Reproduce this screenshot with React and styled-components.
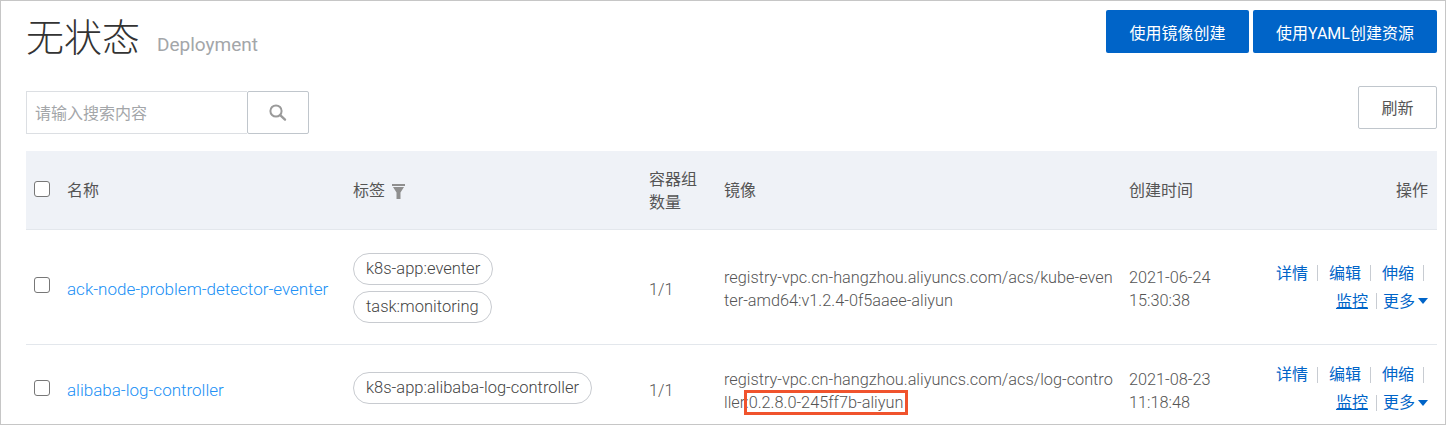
import React from "react"
import styled, { createGlobalStyle } from "styled-components"

const Global = createGlobalStyle`
  html, body {
    margin: 0;
    padding: 0;
    background: #fff;
  }
  body {
    font-family: Roboto, "Noto Sans CJK SC", sans-serif;
    font-size: 16px;
    color: #333;
  }
`

const Page = styled.div`
  box-sizing: border-box;
  width: 1446px;
  height: 425px;
  border: 1px solid #c6c6c6;
  padding: 0 8px 0 25px;
  overflow: hidden;
`

const Header = styled.header`
  display: flex;
  justify-content: space-between;
  height: 85px;
`

const TitleBox = styled.div`
  display: flex;
  align-items: baseline;
  padding-top: 11px;
`

const Title = styled.h1`
  margin: 0;
  font-size: 38px;
  line-height: 52px;
  font-weight: 300;
  color: #333;
`

const SubTitle = styled.span`
  margin-left: 17px;
  font-size: 19px;
  color: #a3a6a9;
`

const Actions = styled.div`
  display: flex;
  gap: 4px;
  padding-top: 9px;
`

const PrimaryButton = styled.button`
  height: 43px;
  width: ${(p) => p.$w}px;
  padding: 0;
  border: none;
  border-radius: 2px;
  background: #0064c8;
  color: #fff;
  font: inherit;
`

const Toolbar = styled.div`
  display: flex;
  justify-content: space-between;
  align-items: flex-start;
  height: 65px;
`

const Search = styled.div`
  display: flex;
  margin-top: 5px;
`

const SearchInput = styled.div`
  box-sizing: border-box;
  width: 221px;
  height: 43px;
  padding-left: 8px;
  border: 1px solid #dcdfe3;
  border-right: none;
  line-height: 43px;
  color: #a3a6a9;
`

const SearchButton = styled.div`
  box-sizing: border-box;
  display: flex;
  align-items: center;
  justify-content: center;
  width: 62px;
  height: 43px;
  padding-top: 1px;
  border: 1px solid #c0c6cc;
  border-radius: 2px;
`

const RefreshButton = styled.button`
  box-sizing: border-box;
  width: 79px;
  height: 43px;
  padding: 0 0 2px;
  border: 1px solid #c0c6cc;
  border-radius: 2px;
  background: #fff;
  color: #555;
  font: inherit;
`

const Table = styled.table`
  width: 1411px;
  table-layout: fixed;
  border-collapse: collapse;
`

const Th = styled.th`
  box-sizing: border-box;
  height: 78px;
  padding: 2px ${(p) => p.$pr || 0}px 0 0;
  background: #eff2f7;
  border-bottom: 1px solid #e3e7ec;
  font-weight: 400;
  line-height: 23px;
  text-align: ${(p) => p.$align || "left"};
  color: #555;
`

const Td = styled.td`
  box-sizing: border-box;
  height: ${(p) => p.$h}px;
  padding: 0;
  border-bottom: ${(p) => (p.$last ? "none" : "1px solid #e3e7ec")};
  color: #555;
  vertical-align: middle;
`

const Check = styled.span`
  display: block;
  box-sizing: border-box;
  width: 16px;
  height: 16px;
  margin: ${(p) => p.$mt ?? -3}px 0 0 8px;
  border: 1px solid #777;
  border-radius: 3px;
  background: #fff;
`

const NameLink = styled.a`
  display: block;
  margin-top: 4px;
  color: #2090f5;
  font-size: 17px;
  font-weight: 300;
`

const FilterIcon = styled.svg`
  width: 13px;
  height: 15px;
  margin-left: 7px;
  vertical-align: -3px;
  fill: #8f8f8f;
`

const TagList = styled.div`
  display: flex;
  flex-direction: column;
  align-items: flex-start;
  gap: 6px;
  margin-top: ${(p) => p.$mt || 0}px;
`

const Tag = styled.span`
  box-sizing: border-box;
  height: 32px;
  padding: 0 12px;
  border: 1px solid #c8cbd0;
  border-radius: 16px;
  line-height: 30px;
  color: #444;
  font-size: 16.5px;
  font-weight: 300;
  white-space: nowrap;
`

const Cell = styled.div`
  padding-right: ${(p) => p.$pr || 0}px;
  margin-top: ${(p) => p.$mt || 0}px;
  font-size: 16.3px;
  font-weight: 300;
  line-height: 23px;
  word-break: break-all;
`

const Marked = styled.span`
  display: inline-block;
  margin: -3px 0 -3px -5px;
  padding: 0 2px;
  border: 3px solid #f0532d;
  line-height: 19px;
`

const OpRows = styled.div`
  display: flex;
  flex-direction: column;
  align-items: flex-end;
  gap: 5px;
  margin-top: ${(p) => p.$mt || 0}px;
`

const OpRow = styled.div`
  display: flex;
  align-items: center;
  line-height: 23px;
  margin-right: ${(p) => p.$mr}px;
`

const OpLink = styled.a`
  color: #0064c8;
`

const OpMain = styled(OpLink)`
  text-decoration: underline;
`

const Sep = styled.span`
  width: 1px;
  height: 16px;
  margin: 0 ${(p) => p.$r ?? 11}px 0 ${(p) => p.$l ?? 9}px;
  background: #c8ccd2;
`

const Caret = styled.span`
  width: 0;
  height: 0;
  margin-left: 3px;
  border-left: 5.5px solid transparent;
  border-right: 5.5px solid transparent;
  border-top: 6px solid #0064c8;
`

const rows = [
  {
    name: "ack-node-problem-detector-eventer",
    tags: ["k8s-app:eventer", "task:monitoring"],
    image: "registry-vpc.cn-hangzhou.aliyuncs.com/acs/kube-eventer-amd64:v1.2.4-0f5aaee-aliyun",
    date: "2021-06-24",
    time: "15:30:38",
    h: 115,
    opMt: 1,
    textMt: 4,
    checkMt: -4,
    tagMt: 2,
  },
  {
    name: "alibaba-log-controller",
    tags: ["k8s-app:alibaba-log-controller"],
    image: "registry-vpc.cn-hangzhou.aliyuncs.com/acs/log-controller:",
    mark: "0.2.8.0-245ff7b-aliyun",
    date: "2021-08-23",
    time: "11:18:48",
    h: 88,
    last: true,
    opMt: 1,
    textMt: 5,
    checkMt: -1,
    tagMt: 0,
  },
]

function App() {
  return (
    <Page>
      <Global />
      <Header>
        <TitleBox>
          <Title>无状态</Title>
          <SubTitle>Deployment</SubTitle>
        </TitleBox>
        <Actions>
          <PrimaryButton $w={143}>使用镜像创建</PrimaryButton>
          <PrimaryButton $w={184}>使用YAML创建资源</PrimaryButton>
        </Actions>
      </Header>
      <Toolbar>
        <Search>
          <SearchInput>请输入搜索内容</SearchInput>
          <SearchButton>
            <svg width="18" height="18" viewBox="0 0 18 18" fill="none" stroke="#9a9a9a" strokeWidth="2">
              <circle cx="7" cy="7" r="5.6" />
              <path d="M11.2 11.2l4.8 4.4" strokeWidth="2.4" strokeLinecap="round" />
            </svg>
          </SearchButton>
        </Search>
        <RefreshButton>刷新</RefreshButton>
      </Toolbar>
      <Table>
        <colgroup>
          <col style={{ width: 41 }} />
          <col style={{ width: 286 }} />
          <col style={{ width: 296 }} />
          <col style={{ width: 75 }} />
          <col style={{ width: 405 }} />
          <col style={{ width: 130 }} />
          <col style={{ width: 178 }} />
        </colgroup>
        <thead>
          <tr>
            <Th><Check /></Th>
            <Th>名称</Th>
            <Th>
              标签
              <FilterIcon viewBox="0 0 13 15"><path d="M0 0h13v2H0zM1 3h11L8.5 8.5V15h-4V8.5z" /></FilterIcon>
            </Th>
            <Th>容器组<br />数量</Th>
            <Th>镜像</Th>
            <Th>创建时间</Th>
            <Th $align="right" $pr={9}>操作</Th>
          </tr>
        </thead>
        <tbody>
          {rows.map((r) => (
            <tr key={r.name}>
              <Td $h={r.h} $last={r.last}><Check $mt={r.checkMt} /></Td>
              <Td $h={r.h} $last={r.last}><NameLink>{r.name}</NameLink></Td>
              <Td $h={r.h} $last={r.last}>
                <TagList $mt={r.tagMt}>
                  {r.tags.map((t) => (
                    <Tag key={t}>{t}</Tag>
                  ))}
                </TagList>
              </Td>
              <Td $h={r.h} $last={r.last}><Cell $mt={5}>1/1</Cell></Td>
              <Td $h={r.h} $last={r.last}>
                <Cell $pr={14} $mt={r.textMt}>
                  {r.image}
                  {r.mark && <Marked>{r.mark}</Marked>}
                </Cell>
              </Td>
              <Td $h={r.h} $last={r.last}>
                <Cell $mt={r.textMt}>{r.date}<br />{r.time}</Cell>
              </Td>
              <Td $h={r.h} $last={r.last}>
                <OpRows $mt={r.opMt}>
                  <OpRow $mr={13}>
                    <OpLink>详情</OpLink>
                    <Sep />
                    <OpLink>编辑</OpLink>
                    <Sep />
                    <OpLink>伸缩</OpLink>
                    <Sep $r={0} />
                  </OpRow>
                  <OpRow $mr={9}>
                    <OpMain>监控</OpMain>
                    <Sep $l={8} $r={6} />
                    <OpLink>更多</OpLink>
                    <Caret />
                  </OpRow>
                </OpRows>
              </Td>
            </tr>
          ))}
        </tbody>
      </Table>
    </Page>
  )
}

export default App
